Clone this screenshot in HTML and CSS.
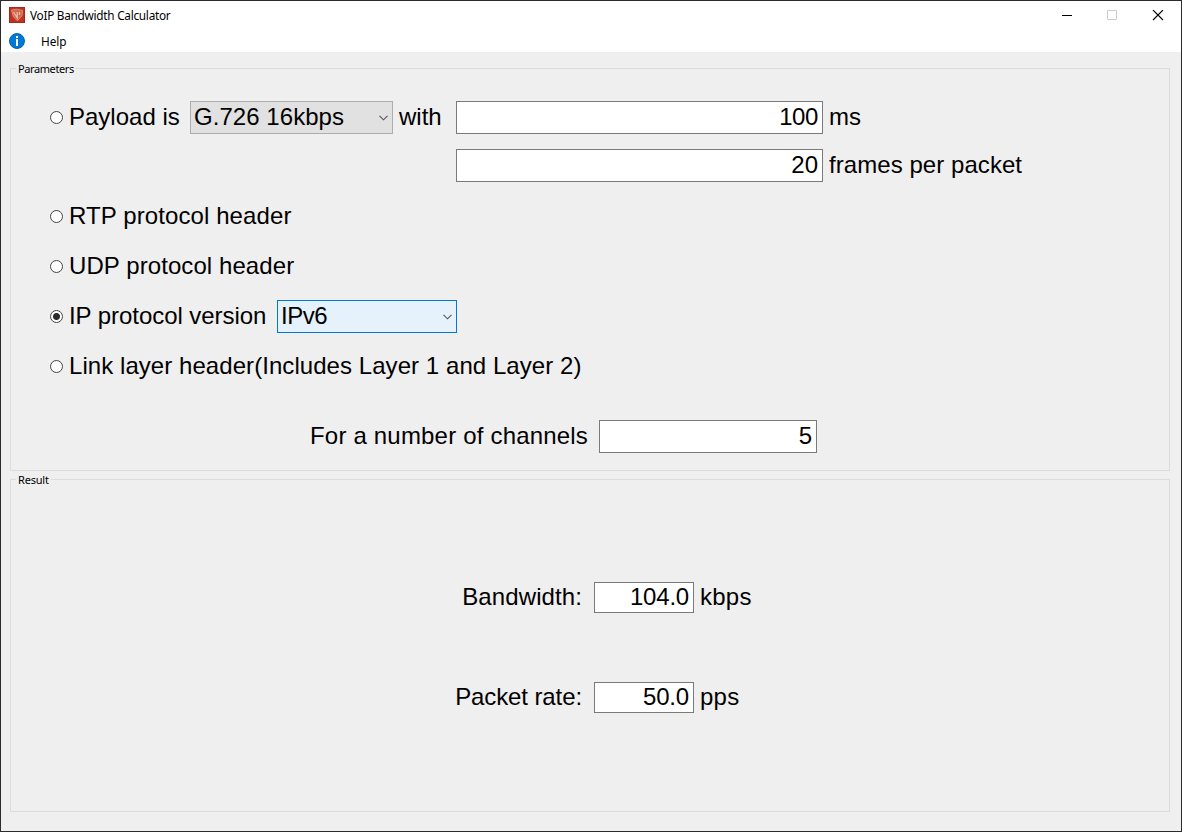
FILE: index.html
```html
<!DOCTYPE html>
<html lang="en">
<head>
<meta charset="utf-8">
<title>VoIP Bandwidth Calculator</title>
<link rel="stylesheet" href="styles.css">
</head>
<body>
<div class="window">
  <header class="titlebar">
    <svg class="app-icon" width="16" height="16" viewBox="0 0 16 16">
      <rect width="16" height="16" fill="#bb3426"/>
      <path d="M0 .5H16M.5 0V16M15.5 0V16M0 15.5H16" stroke="#a5281b" fill="none"/>
      <path d="M2.5 3L7 2L13.5 3.2L13 9L8.5 14L4 9.5Z" fill="#cf6650"/>
      <path d="M2.5 3.2L7.5 2.2L13.5 3.5L13 8.5L8.5 13.8L4.5 9.8Z" fill="none" stroke="#e08a72" stroke-width="1"/>
      <path d="M4.5 5L8.2 10.8V5M10.5 5V8" fill="none" stroke="#f3b9a0" stroke-width="1.3"/>
    </svg>
    <span class="title">VoIP Bandwidth Calculator</span>
    <svg class="controls" width="104" height="12" viewBox="0 0 104 12">
      <path d="M0 5.5H10" stroke="#000"/>
      <path d="M45.5.5H54.5V9.5H45.5Z" stroke="#ccc" fill="none"/>
      <path d="M91 0L101 10M101 0L91 10" stroke="#000" stroke-width="1.1"/>
    </svg>
  </header>
  <nav class="menubar">
    <svg width="16" height="16" viewBox="0 0 16 16">
      <circle cx="8" cy="8" r="7.5" fill="#0078d7" stroke="#005a9e" stroke-width=".9"/>
      <path d="M7 3h2v2H7zM7 6h2V13H7z" fill="#fff"/>
    </svg>
    <span class="menu-item">Help</span>
  </nav>
  <main class="content">
    <section class="group parameters">
      <span class="legend parameters-legend">Parameters</span>
      <div class="row">
        <span class="radio"></span>
        <span class="label payload-label">Payload is</span>
        <span class="select codec"><span>G.726 16kbps</span><svg width="9" height="6" viewBox="0 0 9 6"><path d="M.5 .8L4.5 4.8L8.5 .8" fill="none" stroke="#555" stroke-width="1.1"/></svg></span>
        <span class="label with-label">with</span>
        <span class="field wide hundred">100</span>
        <span class="label unit">ms</span>
      </div>
      <div class="row frames-row">
        <span class="field wide">20</span>
        <span class="label unit frames">frames per packet</span>
      </div>
      <div class="row option"><span class="radio"></span><span class="label rtp">RTP protocol header</span></div>
      <div class="row option"><span class="radio"></span><span class="label udp">UDP protocol header</span></div>
      <div class="row option">
        <span class="radio checked"></span>
        <span class="label version-label">IP protocol version</span>
        <span class="select version"><span>IPv6</span><svg width="9" height="6" viewBox="0 0 9 6"><path d="M.5 .8L4.5 4.8L8.5 .8" fill="none" stroke="#555" stroke-width="1.1"/></svg></span>
      </div>
      <div class="row option"><span class="radio"></span><span class="label link">Link layer header(Includes Layer 1 and Layer 2)</span></div>
      <div class="row channels-row">
        <span class="label channels-label">For a number of channels</span>
        <span class="field channels">5</span>
      </div>
    </section>
    <section class="group result">
      <span class="legend">Result</span>
      <div class="row result-row">
        <span class="label result-label bandwidth">Bandwidth:</span>
        <span class="field small">104.0</span>
        <span class="label unit kbps">kbps</span>
      </div>
      <div class="row result-row">
        <span class="label result-label rate">Packet rate:</span>
        <span class="field small">50.0</span>
        <span class="label unit kbps">pps</span>
      </div>
    </section>
  </main>
</div>
</body>
</html>
```
FILE: styles.css
```css
* { box-sizing: border-box; }
body { margin: 0; font-family: "Liberation Sans", Arial, sans-serif; color: #000; }
.window {
  width: 1182px;
  height: 832px;
  border: 1px solid #2b2b2d;
  background: #fff;
  display: flex;
  flex-direction: column;
}
.titlebar {
  height: 30px;
  display: flex;
  align-items: flex-start;
  padding: 6px 15px 0 8px;
  font: 11.8px/17px "Noto Sans", "Open Sans", sans-serif;
}
.title { margin-left: 5px; letter-spacing: -0.27px; white-space: nowrap; }
.controls { margin: 3px 0 0 auto; }
.menubar {
  height: 21px;
  display: flex;
  padding: 2px 8px 0;
  font: 11.8px/17px "Noto Sans", "Open Sans", sans-serif;
}
.menu-item { margin-left: 16px; letter-spacing: -0.1px; }
.content { flex: 1; background: #efefef; padding: 16px 11px 0 9px; }
.group { position: relative; border: 1px solid #dcdcdc; }
.parameters { height: 403px; padding: 32px 0 0 39px; }
.result { height: 333px; margin-top: 8px; padding-top: 102px; }
.legend {
  position: absolute;
  left: 5px;
  top: -9px;
  padding: 0 2px;
  background: #efefef;
  font: 11px/17px "Noto Sans", "Open Sans", sans-serif;
  letter-spacing: -0.2px;
}
.parameters-legend { letter-spacing: -0.4px; }
.row { display: flex; align-items: center; height: 33px; font-size: 24px; line-height: 29px; white-space: nowrap; }
.label { padding-bottom: 2px; }
.radio {
  flex: none;
  width: 13px;
  height: 13px;
  margin-right: 6px;
  border: 1px solid #444;
  border-radius: 50%;
  background: #fff;
}
.radio.checked { background: radial-gradient(circle, #2b2b2b 3px, #fff 4px); }
.field, .select { flex: none; height: 33px; border: 1px solid #7a7a7a; background: #fff; }
.field { text-align: right; padding-right: 4px; }
.select { display: flex; align-items: center; justify-content: space-between; padding: 0 4px 0 3px; }
.select span { padding-bottom: 2px; }
.codec { width: 203px; background: #e1e1e1; border-color: #adadad; letter-spacing: 0.05px; }
.version { width: 180px; background: #e5f1fb; border-color: #0078d7; letter-spacing: -0.5px; }
.payload-label { width: 121px; }
.with-label { width: 63px; padding-left: 6px; }
.wide { width: 367px; }
.hundred { letter-spacing: -0.4px; }
.unit { margin-left: 6px; }
.frames { letter-spacing: 0.06px; }
.kbps { letter-spacing: 0.25px; }
.frames-row { margin: 15px 0 18px; padding-left: 406px; }
.option { margin-bottom: 17px; }
.rtp { letter-spacing: 0.1px; }
.udp { letter-spacing: 0.08px; }
.version-label { width: 208px; letter-spacing: -0.05px; }
.link { letter-spacing: 0.06px; }
.channels-row { margin-top: 37px; padding-left: 260px; }
.channels-label { width: 289px; letter-spacing: 0.19px; }
.channels { width: 218px; }
.result-row { height: 31px; line-height: 27px; margin-bottom: 69px; }
.result-label { width: 571px; text-align: right; margin-right: 12px; }
.bandwidth { letter-spacing: 0.1px; }
.rate { letter-spacing: -0.1px; }
.small { width: 100px; height: 31px; letter-spacing: -0.2px; }
```
